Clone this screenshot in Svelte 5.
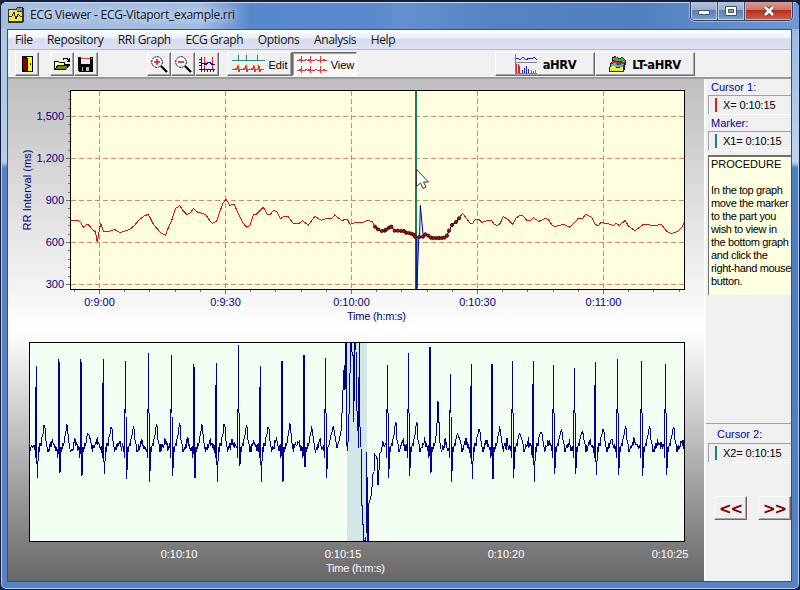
<script>
	const menu = ['File', 'Repository', 'RRI Graph', 'ECG Graph', 'Options', 'Analysis', 'Help'];

	const procedure = [
		'In the top graph',
		'move the marker',
		'to the part you',
		'wish to view in',
		'the bottom graph',
		'and click the',
		'right-hand mouse',
		'button.'
	];

	const yTicks = [
		{ y: 116.5, label: '1,500' },
		{ y: 158.5, label: '1,200' },
		{ y: 200.5, label: '900' },
		{ y: 242.5, label: '600' },
		{ y: 284.5, label: '300' }
	];

	const xTicks = [
		{ x: 99.5, label: '0:9:00' },
		{ x: 225.5, label: '0:9:30' },
		{ x: 351.5, label: '0:10:00' },
		{ x: 477.5, label: '0:10:30' },
		{ x: 603.5, label: '0:11:00' }
	];

	const ecgTicks = [
		{ x: 179, label: '0:10:10' },
		{ x: 343, label: '0:10:15' },
		{ x: 506, label: '0:10:20' },
		{ x: 670, label: '0:10:25' }
	];

	const yMinor = Array.from({ length: 24 }, (_, i) => 91.3 + i * 8.4).filter((y) => y < 289);
	const xMinor = Array.from({ length: 25 }, (_, i) => 74.3 + i * 25.2).filter((x) => x < 684);

	// samples are kept in thirds of a pixel
	const scale = (ox, oy, list) => {
		const out = [];
		for (let i = 0; i < list.length; i += 2) {
			out.push([ox + list[i] / 3, oy + list[i + 1] / 3]);
		}
		return out;
	};
	const toPoints = (list) => list.map(([x, y]) => `${x.toFixed(2)},${y.toFixed(2)}`).join(' ');

	const rrStart = scale(0, 80, [
		213, 422, 236, 422, 243, 428, 250, 442, 260, 433, 268, 436, 274, 446, 286, 455, 292, 487,
		302, 428, 310, 454, 328, 454, 343, 448, 360, 458, 388, 449, 403, 437, 418, 419, 432, 408,
		445, 403, 461, 434, 483, 459, 497, 466, 503, 448, 517, 416, 526, 386, 539, 377, 548, 390,
		560, 403, 570, 400, 580, 386, 592, 396, 608, 400, 618, 405, 628, 420, 637, 430, 650, 424,
		660, 394, 669, 370, 678, 358, 690, 376, 703, 373, 714, 400, 730, 430, 740, 442, 750, 436,
		760, 404, 770, 402, 790, 382, 802, 403, 811, 403, 820, 391, 831, 395, 841, 417, 850, 410,
		864, 410, 880, 430, 898, 430, 907, 422, 925, 435, 945, 409, 964, 421, 980, 415, 994, 416,
		1004, 405, 1025, 421, 1042, 418, 1050, 433
	]);
	const rrBefore = scale(350, 80, [6, 431, 20, 427, 36, 429, 53, 421, 68, 426]);
	const rrMarked = scale(350, 80, [
		75, 440, 84, 448, 95, 453, 104, 452, 108, 449, 117, 443, 124, 440, 134, 452, 144, 452, 154,
		453, 162, 453, 168, 458, 176, 459, 184, 461, 191, 464, 195, 470, 208, 471, 219, 470, 226,
		463, 235, 467, 243, 473, 250, 474, 259, 474, 267, 474, 275, 474, 283, 473, 291, 467, 297,
		452, 306, 435, 318, 426, 327, 415
	]);
	const rrEnd = scale(350, 80, [
		338, 400, 350, 416, 360, 429, 368, 430, 376, 418, 388, 419, 396, 427, 408, 423, 424, 421,
		433, 433, 441, 437, 450, 431, 460, 409, 475, 420, 488, 433, 498, 414, 511, 405, 520, 408,
		530, 421, 540, 423, 550, 413, 566, 424, 585, 416, 595, 418, 605, 434, 614, 440, 632, 435,
		642, 434, 658, 442, 672, 430, 684, 416, 698, 416, 706, 403, 724, 411, 736, 434, 746, 437,
		752, 428, 772, 430, 790, 436, 798, 430, 808, 437, 826, 421, 835, 438, 855, 452, 880, 433,
		900, 435, 915, 437, 934, 433, 948, 452, 964, 461, 982, 455, 996, 442, 1003, 428
	]);
	const rrTrace = toPoints([...rrStart, ...rrBefore, ...rrMarked, ...rrEnd]);
	const rrSpike = toPoints(scale(350, 80, [201, 625, 203, 560, 206, 480, 209, 465, 211, 376, 219, 462, 222, 470]));

	// one heartbeat each: x, R peak, S trough, T peak
	const beats = [
		[109, 108, 445, 286], [177, 87, 428, 283], [243, 87, 437, 313], [310, 87, 431, 290],
		[377, 93, 448, 292], [446, 69, 455, 283], [515, 75, 437, 280], [582, 102, 445, 283],
		[649, 99, 455, 283], [716, 45, 407, 286], [781, 108, 455, 290], [846, 93, 455, 280],
		[912, 75, 410, 295], [977, 84, 443, 288], [1163, 105, 443, 275], [1226, 69, 437, 275],
		[1290, 52, 428, 213], [1352, 132, 455, 317], [1414, 102, 448, 298], [1476, 102, 448, 295],
		[1538, 93, 443, 315], [1600, 93, 455, 305], [1661, 105, 431, 300], [1724, 114, 431, 305],
		[1786, 96, 434, 298], [1853, 87, 434, 288], [1925, 93, 437, 288], [1997, 102, 434, 290]
	];

	const artifact = [
		996, 305, 1000, 288, 1006, 325, 1011, 355, 1018, 328, 1024, 298, 1026, 250, 1031, 135, 1033,
		105, 1035, 180, 1037, 38, 1039, 38, 1040, 330, 1042, 362, 1045, 325, 1048, 220, 1050, 130,
		1053, 38, 1057, 75, 1060, 75, 1061, 275, 1065, 38, 1068, 60, 1070, 240, 1073, 250, 1075, 355,
		1078, 38, 1080, 290, 1083, 350, 1085, 525, 1088, 530, 1090, 632, 1098, 632, 1099, 365, 1101,
		430, 1102, 632, 1106, 632, 1107, 520, 1111, 508, 1115, 490, 1118, 435, 1122, 425, 1124, 373,
		1129, 380, 1132, 388, 1134, 466, 1138, 405, 1140, 370, 1145, 362, 1148, 333, 1153, 350, 1158, 340
	];

	function noise(n) {
		const v = Math.sin(n * 12.9898) * 43758.5453;
		return (v - Math.floor(v)) * 2 - 1;
	}

	function buildEcg() {
		const out = [90, 362, 94, 348, 98, 352, 102, 345, 105, 360];
		beats.forEach(([x, r, s, t], i) => {
			out.push(x - 3, 383, x - 2, 240, x, r, x + 1, 250, x + 1.5, 375, x + 3, s, x + 5, 395, x + 6, 352);
			if (i === 13) {
				out.push(x + 10, 345, x + 15, 320, ...artifact);
				return;
			}
			const next = i < beats.length - 1 ? beats[i + 1][0] : 2065;
			out.push(x + 8, 366, x + 11, 338, x + 14, 347, x + 17, 320, x + 20, 312, x + 23, t);
			out.push(x + 26, t + 8, x + 28, 330, x + 31, 342, x + 34, 366);
			const from = x + 36;
			const to = next - 4;
			for (let k = from; k < to; k += 1.6) {
				const pos = (k - from) / (to - from);
				const p = Math.exp(-(((pos - 0.45) / 0.18) ** 2)) * 20;
				out.push(k, 353 - p + noise(k) * 13);
			}
		});
		return toPoints(scale(0, 330, out).filter(([x]) => x < 684.5));
	}

	const ecgTrace = buildEcg();
</script>

<div class="window">
	<header class="titlebar">
		<svg class="app-icon" width="16" height="16" viewBox="0 0 16 16" shape-rendering="crispEdges">
			<path d="M0 2h8l1-2h6l1 2v12l-2 2H0z" fill="#33341a" />
			<path d="M1 3h8v2h5v9H1z" fill="#f4e93c" />
			<path d="M9 1h5v3H9z" fill="#8b969d" />
			<path d="M1 9h3l2-4 2 7 2-5 2 2h2" fill="none" stroke="#292977" />
		</svg>
		<h1>ECG Viewer - ECG-Vitaport_example.rri</h1>
		<div class="controls">
			<button class="min" aria-label="Minimize">
				<svg width="14" height="12" viewBox="0 0 14 12"><rect x="1.5" y="5.5" width="11" height="4" rx=".5" fill="#fff" stroke="#46546a" /></svg>
			</button>
			<button class="max" aria-label="Maximize">
				<svg width="14" height="12" viewBox="0 0 14 12"><path d="M1.5 1.5h11v9h-11z" fill="#fff" stroke="#46546a" /><path d="M4.5 4.5h5v3h-5z" fill="#8b9cb6" stroke="#46546a" /></svg>
			</button>
			<button class="close" aria-label="Close">
				<svg width="14" height="12" viewBox="0 0 14 12"><path d="M3 2l8 8M11 2l-8 8" stroke="#4b3440" stroke-width="4.5" /><path d="M3 2l8 8M11 2l-8 8" stroke="#fff" stroke-width="2.8" /></svg>
			</button>
		</div>
	</header>

	<div class="client">
		<nav>
			{#each menu as item}
				<span>{item}</span>
			{/each}
		</nav>

		<div class="toolbar">
			<button class="tool" aria-label="Exit">
				<svg width="18" height="18" viewBox="0 0 18 18" shape-rendering="crispEdges">
					<path d="M4 1h11v16H4z" fill="#000" />
					<path d="M9 2h5v14H9z" fill="#ff0" />
					<path d="M5 2l4 2v12l-4-1z" fill="#800000" />
					<path d="M9.5 3v14M12.500 8v2" stroke="#000" />
				</svg>
			</button>
			<button class="tool open" aria-label="Open">
				<svg width="18" height="18" viewBox="0 0 18 18" shape-rendering="crispEdges">
					<path d="M1.5 14.5v-8h4l1 1h5v2h5l-4 5z" fill="#ffff9a" stroke="#000" />
					<path d="M2 14.5l3-4.5h11.5l-4 4.5z" fill="#808000" stroke="#000" />
					<path d="M10 4.5l1-1h3l2 2M16.5 3v3h-3" fill="none" stroke="#000" />
				</svg>
			</button>
			<button class="tool" aria-label="Save">
				<svg width="18" height="18" viewBox="0 0 18 18" shape-rendering="crispEdges">
					<path d="M1 2h15v15H2l-1-1z" fill="#000" />
					<path d="M4 2h9v7H4z" fill="#efefef" />
					<path d="M4 3.5h9" stroke="#d44" />
					<path d="M5 12h7v4H5z" fill="#bbb" />
					<path d="M6 12h3v4H6z" fill="#000" />
					<path d="M14 3h1v1h-1z" fill="#fff" />
				</svg>
			</button>
			<button class="tool zoom-in" aria-label="Zoom in">
				<svg width="18" height="18" viewBox="0 0 18 18">
					<circle cx="7" cy="7" r="5.3" fill="#fff" stroke="#111" stroke-dasharray="2 .7" />
					<path d="M7 4v6M4 7h6" stroke="#d01020" stroke-width="1.5" />
					<path d="M11 11l6 6" stroke="#000" stroke-width="2.2" />
				</svg>
			</button>
			<button class="tool" aria-label="Zoom out">
				<svg width="18" height="18" viewBox="0 0 18 18">
					<circle cx="7" cy="7" r="5.3" fill="#fff" stroke="#111" stroke-dasharray="2 .7" />
					<path d="M4 7h6" stroke="#d01020" stroke-width="1.5" />
					<path d="M11 11l6 6" stroke="#000" stroke-width="2.2" />
				</svg>
			</button>
			<button class="tool" aria-label="Scale graph">
				<svg width="18" height="18" viewBox="0 0 18 18" shape-rendering="crispEdges">
					<path d="M3.5 2v15M1 14.500h16M1 4.500h2M1 7.500h2M1 10.500h2M6.500 14v3M9.500 14v3M12.500 14v3M15.500 14v3" stroke="#222" />
					<path d="M6.500 2v12M14.500 2v12" stroke="#e02020" />
					<path d="M3 8.500h3l2 1 2-2h2l2 2h3" fill="none" stroke="#0000c0" stroke-width="1.5" />
				</svg>
			</button>
			<button class="tool wide edit">
				<svg width="34" height="18" viewBox="0 0 34 18" shape-rendering="crispEdges">
					<path d="M0 5.500h33M6.500 0v5M14.500 0v5M25.500 0v5" stroke="#2a8a80" />
					<path d="M6.500 9v8M14.500 9v8M25.500 9v8" stroke="#ffd34d" stroke-width="2" />
					<path d="M0 14.500h3l1-1 1 1 1-4 1 6 1-2h3l1-1 1 1 1-4 1 6 1-2h3l1-1 1 1 1-4 1 6 1-2h2l1-4 1 6 1-2h3" fill="none" stroke="#d93a34" />
				</svg>
				<span>Edit</span>
			</button>
			<button class="tool wide view">
				<svg width="31" height="18" viewBox="0 0 31 18" shape-rendering="crispEdges">
					<path id="beat-row" d="M0 5.500h2l1-1 1 1V.5v7l1-2h3l1-1 2 1 1-1 1 1V.5v7l1-2h3l2-1 2 1h2V.5v7l1-2h2l1-1 1 1h2" fill="none" stroke="#d93a44" />
					<use href="#beat-row" y="10" />
				</svg>
				<span>View</span>
			</button>
			<button class="tool big ahrv">
				<svg width="24" height="20" viewBox="0 0 24 20" shape-rendering="crispEdges">
					<path d="M1.500 0v20M1 8.500h22M1 19.500h22" stroke="#808090" />
					<path d="M2 5l2-1 2 2 3-3 3 3 3-2 3 1 2-2 3 3" fill="none" stroke="#2222c0" />
					<path d="M2.500 19v-9M4.500 19v-9M5.500 19v-7" stroke="#d02838" />
					<path d="M8.500 19v-3M10.500 19v-5M12.500 19v-7M14.500 19v-4" stroke="#2020b0" />
					<path d="M17.500 19v-3M19.500 19v-2M21.500 19v-3" stroke="#8a8a20" />
				</svg>
				<b>aHRV</b>
			</button>
			<button class="tool big">
				<svg width="18" height="16" viewBox="0 0 18 16" shape-rendering="crispEdges">
					<path d="M3 5V1l3-1 4 2 3-1 4 3v3l-2 9H0l1-9z" fill="#222" />
					<path d="M4 2l3-1 3 2 3-1 3 2v2L4 4z" fill="#20c030" />
					<path d="M3 5l3-1 3 2h7l-1 3-12-1z" fill="#c02030" />
					<path d="M2 8l4-1 3 2 6-1-1 3H2z" fill="#20c8e0" />
					<path d="M1 11l4-1 3 2 6-1v4H1z" fill="#ffee20" />
				</svg>
				<b>LT-aHRV</b>
			</button>
		</div>

		<div class="body">
			<main>
				<svg class="rr" width="696" height="252" viewBox="8 79 696 252">
					<rect x="70.5" y="90.5" width="614" height="199" fill="#ffffe0" />
					<g stroke="#d58a5c" stroke-dasharray="5 3" shape-rendering="crispEdges">
						{#each yTicks as { y }}
							<line x1="71" x2="685" y1={y} y2={y} />
						{/each}
						{#each xTicks as { x }}
							<line x1={x} x2={x} y1="91" y2="289" />
						{/each}
					</g>
					<g stroke="#707078" shape-rendering="crispEdges">
						{#each yMinor as y}
							<line x1="68" x2="70" y1={y} y2={y} />
						{/each}
						{#each yTicks as { y }}
							<line x1="66" x2="70" y1={y} y2={y} />
						{/each}
						{#each xMinor as x}
							<line x1={x} x2={x} y1="290" y2="292" />
						{/each}
						{#each xTicks as { x }}
							<line x1={x} x2={x} y1="290" y2="294" />
						{/each}
					</g>
					<g class="axis">
						{#each yTicks as { y, label }}
							<text x="64" y={y + 3.5} text-anchor="end">{label}</text>
						{/each}
						{#each xTicks as { x, label }}
							<text {x} y="306" text-anchor="middle">{label}</text>
						{/each}
						<text x="376.5" y="320" text-anchor="middle" textLength="59">Time (h:m:s)</text>
						<text transform="translate(31 190) rotate(-90)" text-anchor="middle" textLength="81">RR Interval (ms)</text>
					</g>
					<rect x="70.5" y="90.5" width="614" height="199" fill="none" stroke="#000" />
					<polyline points={rrTrace} fill="none" stroke="#cc1818" shape-rendering="crispEdges" />
					<polyline points={toPoints(rrMarked)} fill="none" stroke="#10104a" />
					<line x1="416" x2="416" y1="91" y2="289" stroke="#187a58" stroke-width="2" />
					<line x1="416.500" x2="416.500" y1="237" y2="289" stroke="#00289a" stroke-width="2" />
					<polyline points={rrSpike} fill="none" stroke="#0000a0" />
					{#each rrMarked as [x, y]}
						<circle cx={x} cy={y} r="1.6" fill="#b01018" stroke="#300000" stroke-width=".9" />
					{/each}
					<path class="pointer" d="M416.5 169.500v17l4-3.500 2.500 5.500 3-1.500-2.500-5h5z" />
				</svg>

				<svg class="ecg" width="696" height="251" viewBox="8 331 696 251">
					<rect x="29.5" y="342.5" width="655" height="199" fill="#f2fff2" />
					<rect x="347" y="343" width="20" height="198" fill="#d3e7e9" />
					<polyline points={ecgTrace} fill="none" stroke="#00008c" shape-rendering="crispEdges" />
					<rect x="29.5" y="342.5" width="655" height="199" fill="none" stroke="#000" />
					<g class="axis light">
						{#each ecgTicks as { x, label }}
							<text {x} y="558" text-anchor="middle">{label}</text>
						{/each}
						<text x="355.5" y="572" text-anchor="middle" textLength="59">Time (h:m:s)</text>
					</g>
				</svg>
			</main>

			<aside>
				<label for="c1">Cursor 1:</label>
				<output id="c1"><i class="red"></i>X= 0:10:15</output>
				<label for="m1">Marker:</label>
				<output id="m1"><i></i>X1= 0:10:15</output>
				<div class="memo">
					<p>PROCEDURE</p>
					<p class="steps-text">
						{#each procedure as line}
							<span>{line}</span>
						{/each}
					</p>
				</div>
				<section>
					<label for="c2">Cursor 2:</label>
					<output id="c2"><i></i>X2= 0:10:15</output>
					<div class="steps">
						<button class="tool">&lt;&lt;</button>
						<button class="tool">&gt;&gt;</button>
					</div>
				</section>
			</aside>
		</div>
	</div>
</div>

<style>
	:global(body) {
		margin: 0;
		background: #1a2436;
	}

	.window {
		box-sizing: border-box;
		width: 800px;
		height: 590px;
		padding: 0 7px 7px 6px;
		border: 1px solid #14203a;
		border-top-width: 2px;
		border-radius: 7px 7px 6px 6px;
		background:
			linear-gradient(#a9c4e8, #b7cdea 160px, #5580c2 166px, #5682c6) left / 7px 100% no-repeat,
			linear-gradient(#8fb2e2, #c2d4ee 160px, #4c7cc4 166px, #5682c6) right / 7px 100% no-repeat,
			#5682c8;
		box-shadow: inset 0 0 0 1px #b5cdee;
		overflow: hidden;
		font-family: "Liberation Sans", Arial, sans-serif;
		font-size: 11px;
	}

	.titlebar {
		display: flex;
		align-items: center;
		height: 27px;
		margin: 0 -7px 0 -6px;
		padding-left: 7px;
		background:
			linear-gradient(#c8daf3 0 1px, transparent 1px),
			linear-gradient(90deg, #a3bce0, #a2bce2 200px, #5987cb 250px, #5c8acb 380px, #6590cf 400px, #5783c5 490px, #527fbf 640px, #6f9ad6 800px);
	}

	.app-icon {
		margin-top: -1px;
	}

	h1 {
		margin: -2px 0 0 6px;
		font: 12px "Open Sans", "Noto Sans", sans-serif;
		letter-spacing: -0.27px;
		color: #0b1020;
		text-shadow: 0 0 6px #dce8f6, 0 0 8px #dce8f6;
	}

	button {
		display: flex;
		align-items: center;
		justify-content: center;
		box-sizing: border-box;
		padding: 0;
		font: inherit;
		color: #000;
	}

	.controls {
		display: flex;
		align-self: flex-start;
		margin: -1px 6px 0 auto;
		height: 19px;
		border: 1px solid #2e3f5e;
		border-top: 0;
		border-radius: 0 0 5px 5px;
		overflow: hidden;
		box-shadow: 0 0 0 1px #9ab6df;
	}

	.controls button {
		width: 27px;
		border: 0;
		border-right: 1px solid #3d5274;
		background: linear-gradient(#b5c6de, #95aed2 45%, #5d7faf 50%, #7d9dca);
		box-shadow: inset 0 0 0 1px #c4d3e7;
	}

	.controls .close {
		width: 47px;
		border: 0;
		background: linear-gradient(#dda096, #cf7468 45%, #b52c20 50%, #d2624c);
		box-shadow: inset 0 0 0 1px #e0aaa4;
	}

	.client {
		height: 553px;
		border: 1px solid #3e4f6c;
		box-sizing: border-box;
		background: #f0f0f0;
		overflow: hidden;
	}

	nav {
		display: flex;
		gap: 14.5px;
		height: 20px;
		padding-left: 7px;
		box-sizing: border-box;
		border-bottom: 1px solid #b4b9c6;
		background: linear-gradient(#fff, #edf1f9 40%, #d7ddef 50%, #dce2f2);
		font: 12px/20px "Open Sans", "Noto Sans", sans-serif;
		letter-spacing: -0.36px;
		white-space: nowrap;
		color: #111;
	}

	.toolbar {
		display: flex;
		height: 29px;
		box-sizing: border-box;
		padding: 2px 0 0 7px;
		border-bottom: 2px solid #999;
	}

	.tool {
		width: 24px;
		height: 24px;
		flex: none;
		border: 1px solid;
		border-color: #fff #696969 #696969 #fff;
		background: #f0f0f0;
		box-shadow: inset -1px -1px #a8a8a8;
	}

	.open {
		margin-left: 11px;
	}

	.zoom-in {
		margin-left: 49px;
	}

	.wide {
		width: 65px;
		gap: 3px;
	}

	.wide span {
		margin-top: 2px;
	}

	.edit {
		margin-left: 8px;
	}

	.view {
		border-color: #696969 #fff #fff #696969;
		box-shadow: inset 1px 1px #a0a0a0;
		background: #f8f8f8;
		padding-left: 2px;
	}

	.big {
		width: 100px;
		gap: 5px;
	}

	.big b {
		font: bold 11.5px "DejaVu Sans", sans-serif;
		letter-spacing: -0.4px;
		margin-top: 2px;
	}

	.ahrv {
		margin-left: 138px;
	}

	.body {
		display: flex;
		height: 502px;
	}

	main {
		display: flex;
		flex-direction: column;
		width: 696px;
		flex: none;
	}

	main svg {
		flex: none;
	}

	.rr {
		background: linear-gradient(#bfbfbf, #fff);
	}

	.ecg {
		background: linear-gradient(#fff, #666);
	}

	.axis {
		font-size: 11px;
		fill: #000080;
	}

	.light {
		fill: #fff;
	}

	.pointer {
		fill: #fff;
		stroke: #333;
	}

	aside {
		flex: 1;
		min-width: 0;
		padding: 1px 0 0 2px;
		border-left: 2px solid #fff;
		white-space: nowrap;
	}

	label {
		display: block;
		height: 15px;
		padding-left: 3px;
		line-height: 15px;
		color: #0000a8;
	}

	output {
		display: flex;
		align-items: center;
		height: 20px;
		padding-left: 6px;
		border: 1px solid #a0a0a0;
		border-width: 1px 0 0 1px;
		border-bottom: 1px solid #fff;
		box-sizing: border-box;
		margin-bottom: 1px;
		letter-spacing: -0.1px;
	}

	output i {
		width: 2px;
		height: 14px;
		margin-right: 6px;
		flex: none;
		background: #208078;
	}

	output .red {
		background: #d82020;
	}

	.memo {
		height: 140px;
		margin-top: 4px;
		padding: 1px 0 0 2px;
		box-sizing: border-box;
		border-top: 2px solid #707070;
		border-left: 1px solid #707070;
		background: #ffffe1;
		line-height: 13px;
		overflow: hidden;
	}

	.memo p {
		margin: 0 0 13px;
	}

	.steps-text {
		letter-spacing: -0.35px;
	}

	.memo span {
		display: block;
	}

	section {
		margin-top: 128px;
		margin-left: -2px;
		padding: 3px 0 0 2px;
		border-top: 1px solid #a0a0a0;
	}

	section label {
		padding-left: 9px;
		margin-bottom: 1px;
	}

	.steps {
		display: flex;
		gap: 11px;
		margin: 33px 0 0 6px;
	}

	.steps .tool {
		width: 33px;
		font: bold 15px "DejaVu Sans", sans-serif;
		letter-spacing: -1px;
		padding-top: 2px;
		color: #800000;
	}
</style>
